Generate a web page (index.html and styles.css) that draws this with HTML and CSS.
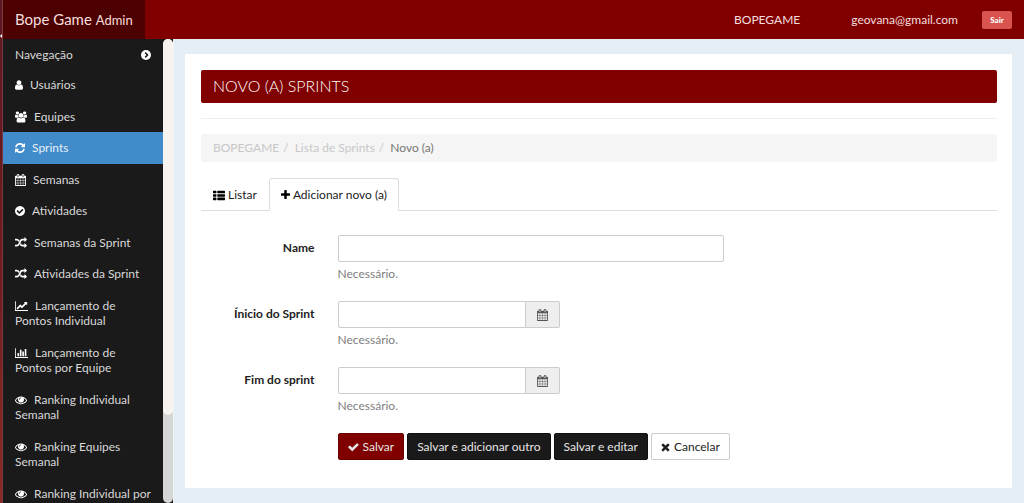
FILE: index.html
```html
<!DOCTYPE html>
<html lang="pt-br">
<head>
<meta charset="utf-8">
<title>Novo (a) Sprints - Bope Game Admin</title>
<link rel="stylesheet" href="styles.css">
</head>
<body>
<svg class="sprite" aria-hidden="true">
  <symbol id="user" viewBox="256 0 1280 1792"><path d="M1536 1399q0 109-62.5 187t-150.5 78h-854q-88 0-150.5-78t-62.5-187q0-85 8.5-160.5t31.5-152 58.5-131 94-89 134.5-34.5q131 128 313 128t313-128q76 0 134.5 34.5t94 89 58.5 131 31.5 152 8.5 160.5zm-256-887q0 159-112.5 271.5t-271.5 112.5-271.5-112.5-112.5-271.5 112.5-271.5 271.5-112.5 271.5 112.5 112.5 271.5z"/></symbol>
  <symbol id="users" viewBox="64 0 1920 1792"><path d="M657 896q-162 5-265 128h-134q-82 0-138-40.5t-56-118.5q0-353 124-353 6 0 43.5 21t97.5 42.5 119 21.5q67 0 133-23-5 37-5 66 0 139 81 256zm1071 637q0 120-73 189.5t-194 69.5h-874q-121 0-194-69.5t-73-189.5q0-53 3.5-103.5t14-109 26.5-108.5 43-97.5 62-81 85.5-53.5 111.5-20q10 0 43 21.5t73 48 107 48 135 21.5 135-21.5 107-48 73-48 43-21.5q61 0 111.5 20t85.5 53.5 62 81 43 97.5 26.5 108.5 14 109 3.5 103.5zm-1024-1277q0 106-75 181t-181 75-181-75-75-181 75-181 181-75 181 75 75 181zm704 384q0 159-112.5 271.5t-271.5 112.5-271.5-112.5-112.5-271.5 112.5-271.5 271.5-112.5 271.5 112.5 112.5 271.5zm576 225q0 78-56 118.5t-138 40.5h-134q-103-123-265-128 81-117 81-256 0-29-5-66 66 23 133 23 59 0 119-21.5t97.5-42.5 43.5-21q124 0 124 353zm-128-609q0 106-75 181t-181 75-181-75-75-181 75-181 181-75 181 75 75 181z"/></symbol>
  <symbol id="refresh" viewBox="128 0 1536 1792"><path d="M1639 1056q0 5-1 7-64 268-268 434.5t-478 166.5q-146 0-282.5-55t-243.5-157l-129 129q-19 19-45 19t-45-19-19-45v-448q0-26 19-45t45-19h448q26 0 45 19t19 45-19 45l-137 137q71 66 161 102t187 36q134 0 250-65t186-179q11-17 53-117 8-23 30-23h192q13 0 22.5 9.5t9.5 22.5zm25-800v448q0 26-19 45t-45 19h-448q-26 0-45-19t-19-45 19-45l138-138q-148-137-349-137-134 0-250 65t-186 179q-11 17-53 117-8 23-30 23h-199q-13 0-22.5-9.5t-9.5-22.5v-7q65-268 270-434.5t480-166.5q146 0 284 55.5t245 156.5l130-129q19-19 45-19t45 19 19 45z"/></symbol>
  <symbol id="calendar" viewBox="64 0 1664 1792"><path d="M192 1664h288v-288h-288v288zm352 0h320v-288h-320v288zm-352-352h288v-320h-288v320zm352 0h320v-320h-320v320zm-352-384h288v-288h-288v288zm736 736h320v-288h-320v288zm-384-736h320v-288h-320v288zm768 736h288v-288h-288v288zm-384-352h320v-320h-320v320zm-352-864v-288q0-13-9.500-22.500t-22.500-9.500h-64q-13 0-22.500 9.500t-9.500 22.500v288q0 13 9.500 22.500t22.500 9.500h64q13 0 22.500-9.500t9.500-22.500zm736 864h288v-320h-288v320zm-384-384h320v-288h-320v288zm384 0h288v-288h-288v288zm32-480v-288q0-13-9.500-22.500t-22.500-9.500h-64q-13 0-22.500 9.500t-9.500 22.500v288q0 13 9.500 22.500t22.500 9.500h64q13 0 22.500-9.500t9.500-22.500zm384-64v1280q0 52-38 90t-90 38h-1408q-52 0-90-38t-38-90v-1280q0-52 38-90t90-38h128v-96q0-66 47-113t113-47h64q66 0 113 47t47 113v96h384v-96q0-66 47-113t113-47h64q66 0 113 47t47 113v96h128q52 0 90 38t38 90z"/></symbol>
  <symbol id="check-circle" viewBox="128 0 1536 1792"><path d="M1412 734q0-28-18-46l-91-90q-19-19-45-19t-45 19l-408 407-226-226q-19-19-45-19t-45 19l-91 90q-18 18-18 46 0 27 18 45l362 362q19 19 45 19 27 0 46-19l543-543q18-18 18-45zm252 162q0 209-103 385.500t-279.500 279.500-385.500 103-385.500-103-279.500-279.500-103-385.500 103-385.500 279.500-279.500 385.500-103 385.500 103 279.500 279.500 103 385.500z"/></symbol>
  <symbol id="random" viewBox="0 0 1792 1792"><path d="M666 481q-60 92-137 273-22-45-37-72.500t-40.500-63.500-51-56.500-63-35-81.500-14.500h-224q-14 0-23-9t-9-23v-192q0-14 9-23t23-9h224q250 0 410 225zm1126 799q0 14-9 23l-320 320q-9 9-23 9-13 0-22.500-9.500t-9.500-22.500v-192q-32 0-85 .5t-81 1-73-1-71-5-64-10.500-63-18.500-58-28.500-59-40-55-53.500-56-69.500q59-93 136-273 22 45 37 72.500t40.500 63.500 51 56.500 63 35 81.500 14.500h256v-192q0-14 9-23t23-9q12 0 24 10l319 319q9 9 9 23zm0-896q0 14-9 23l-320 320q-9 9-23 9-13 0-22.500-9.500t-9.500-22.500v-192h-256q-48 0-87 15t-69 45-51 61.500-45 77.500q-32 62-78 171-29 66-49.500 111t-54 105-64 100-74 83-90 68.500-106.500 42-128 16.500h-224q-14 0-23-9t-9-23v-192q0-14 9-23t23-9h224q48 0 87-15t69-45 51-61.500 45-77.500q32-62 78-171 29-66 49.500-111t54-105 64-100 74-83 90-68.500 106.500-42 128-16.500h256v-192q0-14 9-23t23-9q12 0 24 10l319 319q9 9 9 23z"/></symbol>
  <symbol id="line-chart" viewBox="0 0 2048 1792"><path d="M2048 1536v128h-2048v-1536h128v1408h1920zm-128-1248v435q0 21-19.500 29.500t-35.500-7.500l-121-121-633 633q-10 10-23 10t-23-10l-233-233-416 416-192-192 585-585q10-10 23-10t23 10l233 233 464-464-121-121q-16-16-7.500-35.500t29.500-19.500h435q14 0 23 9t9 23z"/></symbol>
  <symbol id="bar-chart" viewBox="0 0 2048 1792"><path d="M640 896v512h-256v-512h256zm384-512v1024h-256v-1024h256zm1024 1152v128h-2048v-1536h128v1408h1920zm-640-896v768h-256v-768h256zm384-384v1152h-256v-1152h256z"/></symbol>
  <symbol id="eye" viewBox="0 0 1792 1792"><path d="M1664 960q-152-236-381-353 61 104 61 225 0 185-131.500 316.500t-316.500 131.500-316.500-131.500-131.500-316.500q0-121 61-225-229 117-381 353 133 205 333.500 326.500t434.500 121.500 434.500-121.500 333.500-326.500zm-720-384q0-20-14-34t-34-14q-125 0-214.500 89.500t-89.500 214.500q0 20 14 34t34 14 34-14 14-34q0-86 61-147t147-61q20 0 34-14t14-34zm848 384q0 34-20 69-140 230-376.500 368.500t-499.500 138.500-499.500-139-376.500-368q-20-35-20-69t20-69q140-229 376.500-368t499.500-139 499.500 139 376.500 368q20 35 20 69z"/></symbol>
  <symbol id="chevron" viewBox="128 0 1536 1792"><circle cx="896" cy="896" r="768"/><path d="M768 530l366 366-366 366" fill="none" stroke="#1a1a1a" stroke-width="230"/></symbol>
  <symbol id="th-list" viewBox="0 0 1792 1792"><path d="M70 256h372q70 0 70 70v244q0 70-70 70H70q-70 0-70-70V326q0-70 70-70zM710 256h1012q70 0 70 70v244q0 70-70 70H710q-70 0-70-70V326q0-70 70-70zM70 768h372q70 0 70 70v244q0 70-70 70H70q-70 0-70-70V838q0-70 70-70zM710 768h1012q70 0 70 70v244q0 70-70 70H710q-70 0-70-70V838q0-70 70-70zM70 1280h372q70 0 70 70v244q0 70-70 70H70q-70 0-70-70v-244q0-70 70-70zM710 1280h1012q70 0 70 70v244q0 70-70 70H710q-70 0-70-70v-244q0-70 70-70z"/></symbol>
  <symbol id="plus" viewBox="192 0 1408 1792"><path d="M1600 736v192q0 40-28 68t-68 28h-416v416q0 40-28 68t-68 28h-192q-40 0-68-28t-28-68v-416h-416q-40 0-68-28t-28-68v-192q0-40 28-68t68-28h416v-416q0-40 28-68t68-28h192q40 0 68 28t28 68v416h416q40 0 68 28t28 68z"/></symbol>
  <symbol id="check" viewBox="100 0 1600 1792"><path d="M1671 566q0 40-28 68l-724 724-136 136q-28 28-68 28t-68-28l-136-136-362-362q-28-28-28-68t28-68l136-136q28-28 68-28t68 28l294 295 656-657q28-28 68-28t68 28l136 136q28 28 28 68z"/></symbol>
  <symbol id="times" viewBox="256 0 1280 1792"><path d="M1490 1322q0 40-28 68l-136 136q-28 28-68 28t-68-28l-294-294-294 294q-28 28-68 28t-68-28l-136-136q-28-28-28-68t28-68l294-294-294-294q-28-28-28-68t28-68l136-136q28-28 68-28t68 28l294 294 294-294q28-28 68-28t68 28l136 136q28 28 28 68t-28 68l-294 294 294 294q28 28 28 68z"/></symbol>
</svg>
<div class="edge"><span class="edge-handle"></span></div>
<div class="app">
  <header class="topbar">
    <a class="brand" href="#">Bope Game <small>Admin</small></a>
    <nav class="account">
      <a href="#">BOPEGAME</a>
      <a href="#">geovana@gmail.com</a>
      <button class="logout" type="button">Sair</button>
    </nav>
  </header>
  <div class="body">
    <nav class="sidebar">
      <div class="nav-title">Navegação <svg class="icon w10"><use href="#chevron"/></svg></div>
      <a href="#"><svg class="icon w8"><use href="#user"/></svg>Usuários</a>
      <a href="#"><svg class="icon w12"><use href="#users"/></svg>Equipes</a>
      <a class="active" href="#"><svg class="icon w10"><use href="#refresh"/></svg>Sprints</a>
      <a href="#"><svg class="icon w11"><use href="#calendar"/></svg>Semanas</a>
      <a href="#"><svg class="icon w10"><use href="#check-circle"/></svg>Atividades</a>
      <a href="#"><svg class="icon w12"><use href="#random"/></svg>Semanas da Sprint</a>
      <a href="#"><svg class="icon w12"><use href="#random"/></svg>Atividades da Sprint</a>
      <a href="#"><svg class="icon w13"><use href="#line-chart"/></svg>Lançamento de<br>Pontos Individual</a>
      <a href="#"><svg class="icon w13"><use href="#bar-chart"/></svg>Lançamento de<br>Pontos por Equipe</a>
      <a href="#"><svg class="icon w12"><use href="#eye"/></svg>Ranking Individual<br>Semanal</a>
      <a href="#"><svg class="icon w12"><use href="#eye"/></svg>Ranking Equipes<br>Semanal</a>
      <a href="#"><svg class="icon w12"><use href="#eye"/></svg>Ranking Individual por</a>
    </nav>
    <div class="scroll"><div class="track"><div class="thumb"></div></div></div>
    <main class="content">
      <section class="panel">
        <h1>NOVO (A) SPRINTS</h1>
        <hr>
        <ol class="breadcrumb">
          <li><a href="#">BOPEGAME</a></li>
          <li><a href="#">Lista de Sprints</a></li>
          <li class="current">Novo (a)</li>
        </ol>
        <div class="tabs">
          <a href="#"><svg class="icon w12"><use href="#th-list"/></svg>Listar</a>
          <a class="on" href="#"><svg class="icon w9"><use href="#plus"/></svg>Adicionar novo (a)</a>
        </div>
        <form>
          <div class="row">
            <label for="name">Name</label>
            <div class="field">
              <input id="name" type="text">
              <p>Necessário.</p>
            </div>
          </div>
          <div class="row">
            <label for="start">Ínicio do Sprint</label>
            <div class="field">
              <div class="date"><input id="start" type="text"><button type="button" aria-label="Calendário"><svg class="icon w11"><use href="#calendar"/></svg></button></div>
              <p>Necessário.</p>
            </div>
          </div>
          <div class="row">
            <label for="end">Fim do sprint</label>
            <div class="field">
              <div class="date"><input id="end" type="text"><button type="button" aria-label="Calendário"><svg class="icon w11"><use href="#calendar"/></svg></button></div>
              <p>Necessário.</p>
            </div>
          </div>
          <div class="row">
            <div class="actions">
              <button class="primary" type="submit"><svg class="icon w11"><use href="#check"/></svg>Salvar</button>
              <button class="dark" type="submit">Salvar e adicionar outro</button>
              <button class="dark" type="submit">Salvar e editar</button>
              <button class="plain" type="button"><svg class="icon w9"><use href="#times"/></svg>Cancelar</button>
            </div>
          </div>
        </form>
      </section>
    </main>
  </div>
</div>
</body>
</html>
```
FILE: styles.css
```css
* { box-sizing: border-box; }
body {
  margin: 0;
  display: flex;
  height: 100vh;
  overflow: hidden;
  font: 12px/16px Lato, "Open Sans", sans-serif;
  color: #222;
  background: #e6eef5;
}
a { color: inherit; text-decoration: none; }
button, input { font: inherit; margin: 0; }
.sprite { position: absolute; width: 0; height: 0; }
.icon { height: 12px; fill: currentColor; vertical-align: -2px; flex: none; }
.w8 { width: 8px; }
.w9 { width: 9px; }
.w10 { width: 10px; }
.w11 { width: 11px; }
.w12 { width: 12px; }
.w13 { width: 13px; }

.edge {
  flex: none;
  width: 3px;
  padding-top: 34px;
  background: linear-gradient(#5a1822, #6e1a20 50%, #8a2a26);
  border-right: 1px solid #7a3a3e;
}
.edge-handle {
  display: block;
  width: 2px;
  border: 2px solid transparent;
  border-right-color: #fff;
  border-left: 0;
}
.app { flex: 1; min-width: 0; display: flex; flex-direction: column; }

.topbar {
  flex: none;
  display: flex;
  justify-content: space-between;
  height: 39px;
  background: #800000;
  color: #f4dede;
}
.brand {
  padding: 0 12px;
  font-size: 15px;
  line-height: 39px;
  background: #4d0000;
}
.brand small { font-size: 13px; }
.account { display: flex; align-items: center; padding-right: 12px; }
.account a { margin-left: 51px; }
.logout {
  margin-left: 24px;
  width: 30px;
  height: 18px;
  padding: 0;
  border: 0;
  border-radius: 2px;
  background: #d9534f;
  color: #fff;
  font-size: 8px;
  font-weight: 900;
}

.body { flex: 1; min-height: 0; display: flex; }
.sidebar {
  flex: none;
  width: 160px;
  overflow: hidden;
  background: #1a1a1a;
  color: #d8d8d8;
  line-height: 1.29;
}
.sidebar a, .nav-title { display: block; padding: 8px 12px; white-space: nowrap; }
.sidebar .icon { margin-right: 7px; color: #fff; }
.sidebar .nav-title { display: flex; justify-content: space-between; align-items: center; padding-bottom: 7px; }
.sidebar .nav-title .icon { margin-right: 0; }
.sidebar .active { background: #428bca; color: #e6f0f8; }
.scroll { flex: none; width: 11px; background: #1a1a1a; border-right: 1px solid #f0f4f7; }
.track { height: 100%; border-radius: 5px; background: #d5d7d6; }
.thumb { height: 81%; border-radius: 5px; background: #f7f3f1; }

.content { flex: 1; min-width: 0; padding: 15px 12px 12px 11px; }
.panel { padding: 16px 15px 28px 16px; background: #fff; }
h1 {
  margin: 0;
  padding: 0 12px 1px;
  border-radius: 2px;
  background: #800000;
  color: #fff;
  font-size: 16px;
  font-weight: 300;
  line-height: 32px;
}
hr { margin: 15px 0; border: 0; border-top: 1px solid #eee; }
.breadcrumb {
  display: flex;
  margin: 0 0 16px;
  padding: 6px 12px;
  list-style: none;
  border-radius: 3px;
  background: #f5f5f5;
  color: #c8c8c8;
}
.breadcrumb li + li::before { content: "/"; padding: 0 6px 0 4px; }
.breadcrumb .current::before { color: #c8c8c8; }
.breadcrumb .current { color: #777; }
.tabs { display: flex; border-bottom: 1px solid #ddd; }
.tabs a {
  margin-bottom: -1px;
  padding: 7px 11px;
  border: 1px solid transparent;
  border-top-width: 1px;
  border-radius: 3px 3px 0 0;
  line-height: 17px;
}
.tabs .on { border-color: #ddd #ddd #fff; background: #fff; }
.tabs .icon { margin-right: 3px; color: #000; }

form { padding-top: 24px; }
.row {
  display: grid;
  grid-template-columns: repeat(12, 1fr);
  column-gap: 23px;
  margin-bottom: 15px;
}
.row:last-child { margin: 0; }
.row label { grid-column: span 2; padding-top: 5px; text-align: right; font-weight: 700; white-space: nowrap; }
.field { grid-column: span 6; }
.field input {
  display: block;
  width: 100%;
  height: 27px;
  padding: 4px 10px;
  border: 1px solid #ccc;
  border-radius: 2px;
  background: #fff;
}
.field p { margin: 4px 0; color: #808080; }
.date { display: flex; width: 222px; }
.date input { flex: 1; min-width: 0; border-radius: 2px 0 0 2px; }
.date button {
  width: 34px;
  padding: 0;
  border: 1px solid #ccc;
  border-left: 0;
  border-radius: 0 2px 2px 0;
  background: #eee;
  color: #555;
}
.actions { grid-column: 3 / -1; display: flex; gap: 3px; }
.actions button {
  height: 27px;
  padding: 0 9px;
  border: 1px solid #111;
  border-radius: 2px;
  color: #e6e6e6;
  white-space: nowrap;
}
.actions .icon { margin-right: 4px; }
.actions .primary { background: #800000; border-color: #6b0000; }
.actions .dark { background: #1a1a1a; }
.actions .plain { background: #fff; border-color: #ccc; color: #222; }
```
